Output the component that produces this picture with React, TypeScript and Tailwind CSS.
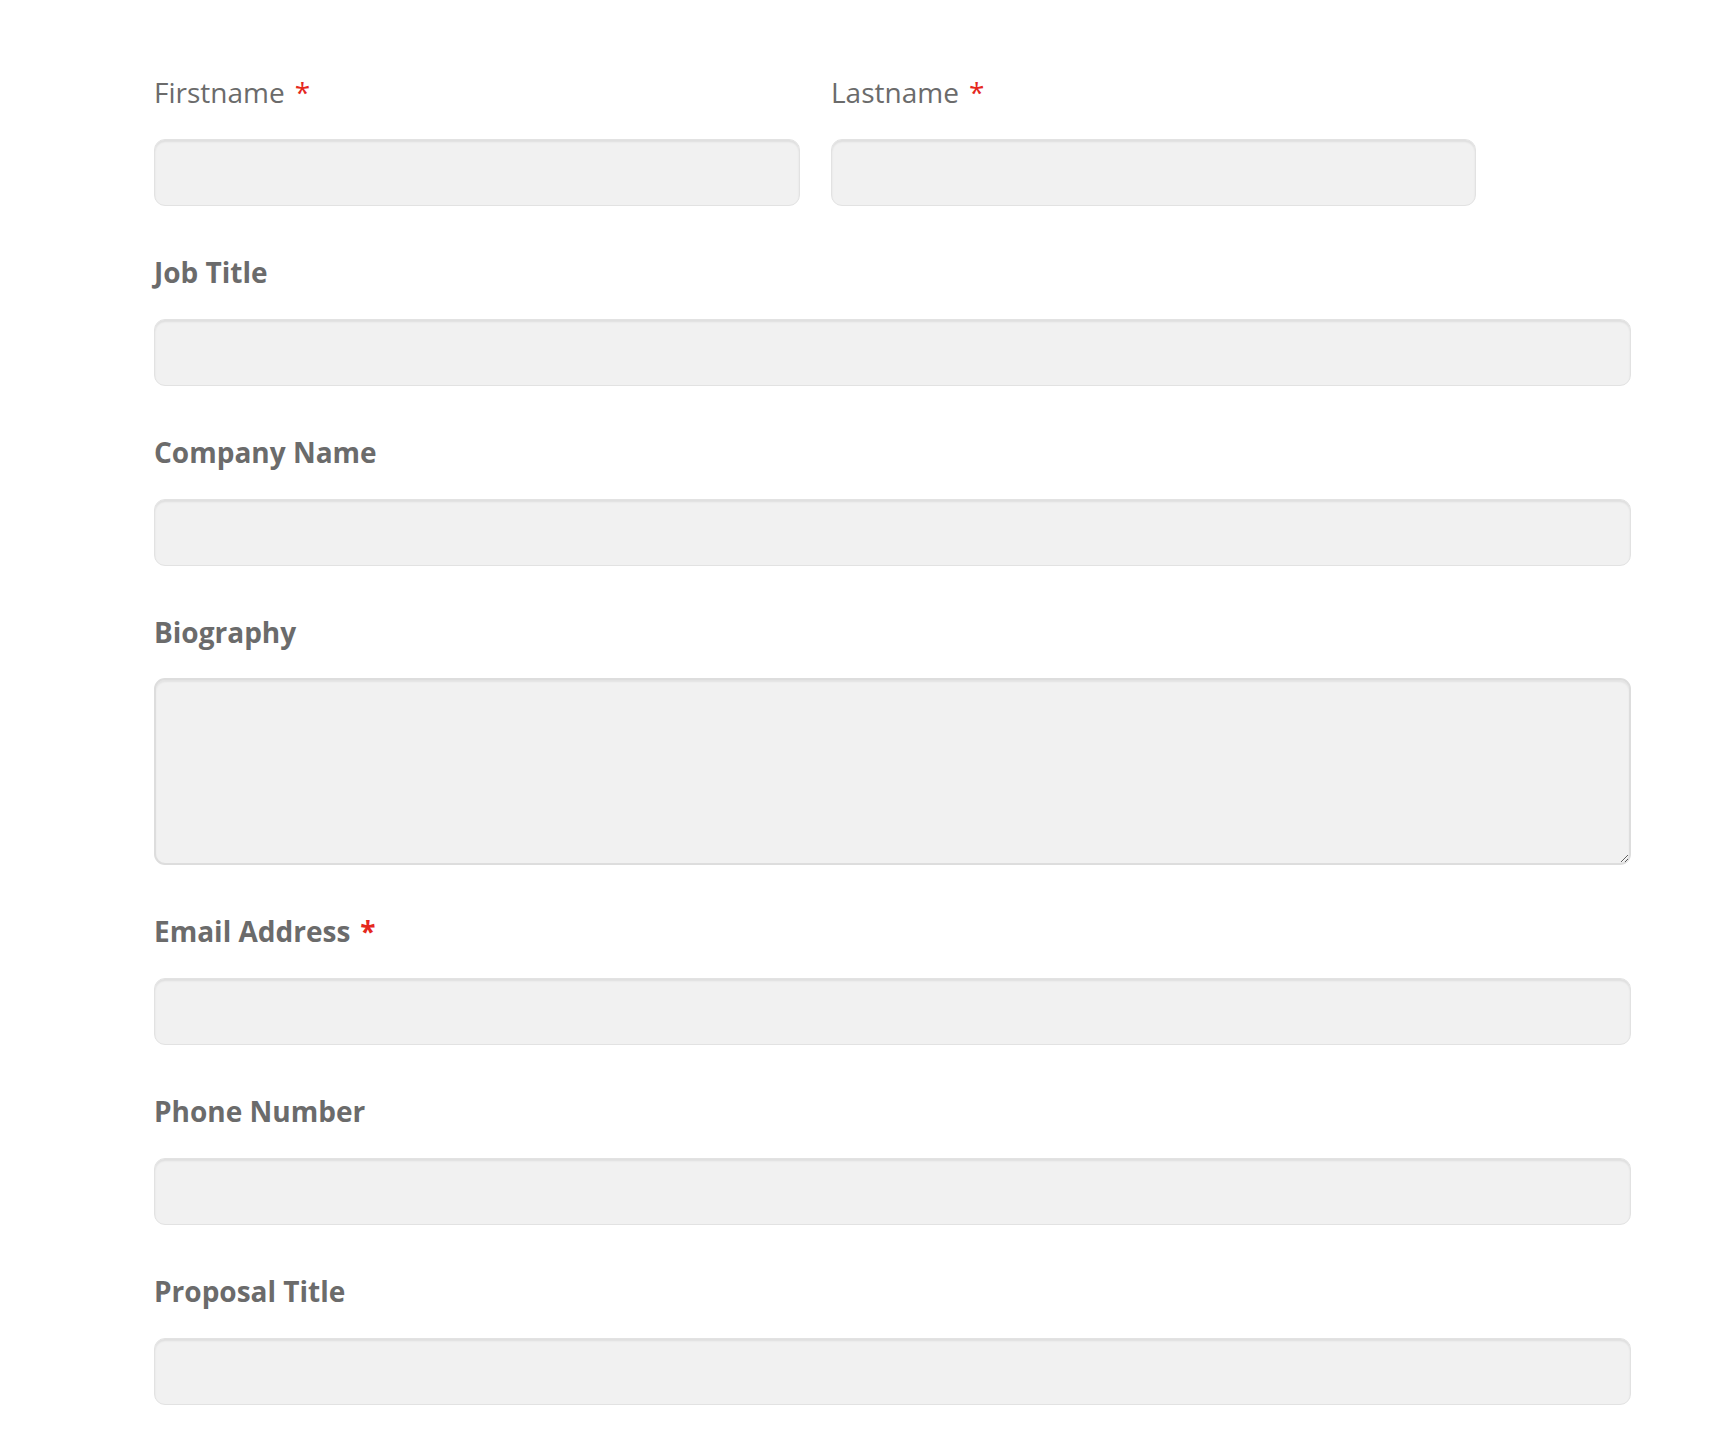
import React from 'react';

const labelFont = { fontFamily: '"Open Sans", "Liberation Sans", sans-serif' };

const inputCls =
  'block h-[67px] rounded-[11px] border border-[#e2e2e2] bg-[#f1f1f1] shadow-[inset_0_2px_2px_rgba(0,0,0,0.08)] outline-none px-4 text-[22px] text-[#555]';

const Req = () => <span className="ml-[10px] text-[#e5281d]">*</span>;

interface FieldProps {
  label: string;
  required?: boolean;
  bold?: boolean;
  width?: string;
  textarea?: boolean;
}

const Field: React.FC<FieldProps> = ({ label, required, bold = true, width = 'w-[1477px]', textarea }) => (
  <div className={width}>
    <label
      className={`block h-[40px] leading-[40px] text-[28px] text-[#6b6b6b] ${bold ? 'font-bold' : 'font-normal'}`}
      style={labelFont}
    >
      {label}
      {required && <Req />}
    </label>
    {textarea ? (
      <textarea
        className="mt-[26px] block h-[187px] w-full rounded-[11px] border-2 border-[#dddddd] bg-[#f1f1f1] shadow-[inset_0_2px_2px_rgba(0,0,0,0.06)] outline-none p-4 text-[22px]"
      />
    ) : (
      <input type="text" className={`mt-[27px] w-full ${inputCls}`} />
    )}
  </div>
);

export default function App() {
  return (
    <div className="min-h-[1440px] bg-white pl-[154px] pt-[72px]">
      <div className="flex flex-col gap-[46px]">
        <div className="flex gap-[31px]">
          <Field label="Firstname" required bold={false} width="w-[646px]" />
          <Field label="Lastname" required bold={false} width="w-[645px]" />
        </div>
        <Field label="Job Title" />
        <Field label="Company Name" />
        <Field label="Biography" textarea />
        <Field label="Email Address" required />
        <Field label="Phone Number" />
        <Field label="Proposal Title" />
      </div>
    </div>
  );
}
